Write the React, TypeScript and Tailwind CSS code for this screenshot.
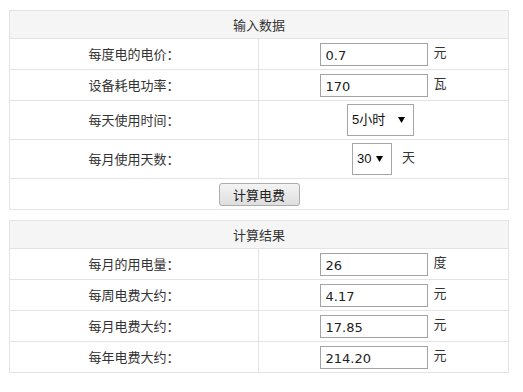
import React from "react"

const cjk = "font-['Microsoft_YaHei','Noto_Sans_CJK_SC',sans-serif]"

function Row({ label, h = "h-[31px]", children }: { label: string; h?: string; children: React.ReactNode }) {
  return (
    <div className={`flex border-t border-[#e3e3e3] ${h}`}>
      <div className="w-[249px] flex items-center justify-center border-r border-[#e3e3e3]">{label}</div>
      <div className="flex-1 flex items-center justify-center">{children}</div>
    </div>
  )
}

function Field({ value, unit }: { value: string; unit: string }) {
  return (
    <>
      <input
        readOnly
        value={value}
        className="w-[108px] h-[23px] border border-[#a3a3a3] px-[4px] pt-[2px] text-[13px] font-normal text-[#222] font-['DejaVu_Sans',sans-serif] outline-none"
      />
      <span className="ml-[5px] -mt-[4px]">{unit}</span>
    </>
  )
}

function Select({ value, options, w }: { value: string; options: string[]; w: string }) {
  return (
    <div className={`relative h-[32px] ${w}`}>
      <select
        defaultValue={value}
        className="appearance-none h-full w-full border border-[#a6a6a6] bg-white pl-[4px] text-[13px] text-[#111] font-['Liberation_Sans','Noto_Sans_CJK_SC',sans-serif] outline-none"
      >
        {options.map(o => (
          <option key={o}>{o}</option>
        ))}
      </select>
      <svg className="pointer-events-none absolute right-[9px] top-[13px]" width="7" height="6" viewBox="0 0 7 6">
        <path d="M0 0h7L3.5 6z" fill="#000" />
      </svg>
    </div>
  )
}

export default function App() {
  return (
    <div className={`bg-white pl-[9px] pt-[10px] pb-[20px] text-[13px] text-[#333] ${cjk}`}>
      {/* 输入数据 */}
      <div className="w-[500px] border border-[#e3e3e3]">
        <div className="h-[27px] bg-[#f5f5f5] flex items-center justify-center">输入数据</div>
        <Row label="每度电的电价：">
          <Field value="0.7" unit="元" />
        </Row>
        <Row label="设备耗电功率：">
          <Field value="170" unit="瓦" />
        </Row>
        <Row label="每天使用时间：" h="h-[39px]">
          <Select value="5小时" w="w-[67px]" options={["1小时", "2小时", "3小时", "4小时", "5小时", "6小时", "8小时", "12小时", "24小时"]} />
          <span className="w-[6px]" />
        </Row>
        <Row label="每月使用天数：" h="h-[39px]">
          <Select value="30" w="w-[40px]" options={["20", "22", "25", "28", "30", "31"]} />
          <span className="ml-[10px] -mt-[4px]">天</span>
        </Row>
        <div className="h-[31px] border-t border-[#e3e3e3] flex items-center justify-center">
          <button className="w-[81px] h-[23px] rounded-[3px] border border-[#acacac] bg-gradient-to-b from-[#f4f4f4] to-[#dedede] text-[13px] text-[#222] leading-none">
            计算电费
          </button>
        </div>
      </div>

      {/* 计算结果 */}
      <div className="mt-[10px] w-[500px] border border-[#e3e3e3]">
        <div className="h-[27px] bg-[#f5f5f5] flex items-center justify-center">计算结果</div>
        <Row label="每月的用电量：">
          <Field value="26" unit="度" />
        </Row>
        <Row label="每周电费大约：">
          <Field value="4.17" unit="元" />
        </Row>
        <Row label="每月电费大约：">
          <Field value="17.85" unit="元" />
        </Row>
        <Row label="每年电费大约：">
          <Field value="214.20" unit="元" />
        </Row>
      </div>
    </div>
  )
}
